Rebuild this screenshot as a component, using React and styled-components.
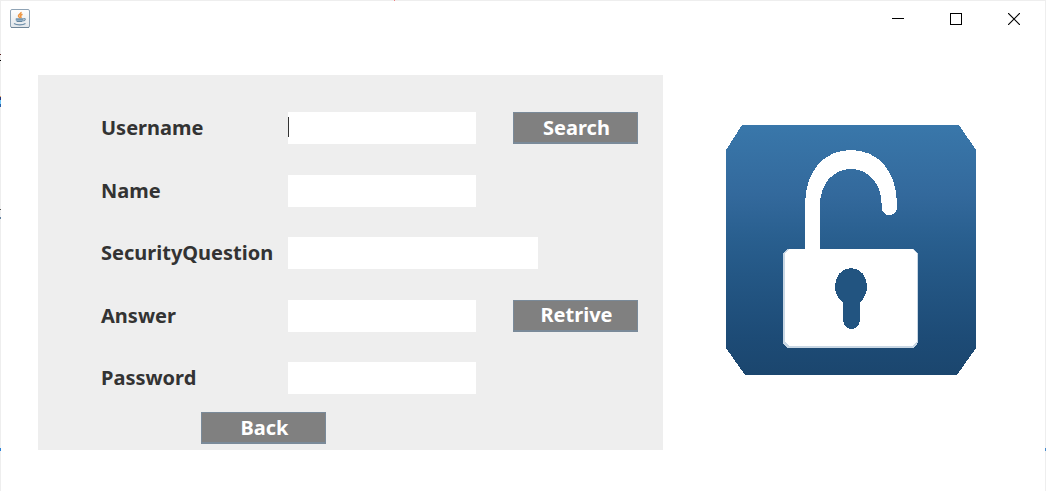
import React from 'react';
import styled, { createGlobalStyle } from 'styled-components';

const GlobalStyle = createGlobalStyle`
  * { box-sizing: border-box; }
  html, body, #root { height: 100%; }
  body {
    margin: 0;
    background: #fff;
    font-family: "Noto Sans", "Open Sans", sans-serif;
  }
`;

const Window = styled.div`
  display: flex;
  flex-direction: column;
  min-height: 100%;
  position: relative;
  border: 1px solid #eeeeee;
  border-bottom: 0;
`;

const EdgeMark = styled.span`
  position: absolute;
  width: 1px;
  height: ${(p) => p.$h}px;
  top: ${(p) => p.$top}px;
  left: ${(p) => p.$left};
  background: ${(p) => p.$color};
`;

const TitleBar = styled.header`
  display: flex;
  align-items: center;
  justify-content: space-between;
  height: 36px;
  padding: 0 2px 0 9px;
`;

const Controls = styled.div`
  display: flex;
`;

const ControlButton = styled.button`
  display: flex;
  align-items: center;
  justify-content: center;
  width: 58px;
  height: 36px;
  padding: 0;
  border: 0;
  background: transparent;
`;

const Content = styled.main`
  display: flex;
  align-items: flex-start;
  gap: 63px;
  padding: 38px 69px 41px 37px;
`;

const Panel = styled.form`
  flex: 1;
  padding: 37px 25px 6px 63px;
  background: #eeeeee;
`;

const Fields = styled.div`
  display: flex;
  flex-direction: column;
  justify-content: space-between;
  min-height: 282px;
`;

const Row = styled.div`
  display: grid;
  grid-template-columns: 187px 188px 1fr;
  align-items: center;
  height: 32px;
`;

const Label = styled.label`
  color: #333333;
  font-size: 20px;
  font-weight: 700;
  line-height: 32px;
`;

const InputBox = styled.div`
  position: relative;
  width: ${(p) => (p.$wide ? 250 : 188)}px;
  height: 32px;
`;

const Input = styled.input`
  display: block;
  width: 100%;
  height: 100%;
  padding: 0;
  border: 0;
  outline: 0;
  background: #fff;
  color: #333333;
  font: inherit;
`;

const Caret = styled.span`
  position: absolute;
  left: 0;
  top: 5px;
  width: 1px;
  height: 20px;
  background: #333333;
`;

const Button = styled.button`
  justify-self: end;
  width: 125px;
  height: 32px;
  padding: 0 0 0 2px;
  border: 1px solid #7a8a99;
  border-bottom-width: 2px;
  background: #808080;
  color: #fff;
  font-family: inherit;
  font-size: 20px;
  font-weight: 700;
  line-height: 28px;
`;

const Footer = styled.div`
  display: flex;
  padding: 18px 0 0 100px;
`;

const Artwork = styled.svg`
  flex: none;
  display: block;
  margin-top: 50px;
`;

const JavaIcon = () => (
  <svg width="20" height="20" viewBox="0 0 20 20" aria-hidden="true">
    <defs>
      <linearGradient id="tile" x1="0" y1="0" x2="0" y2="1">
        <stop offset="0" stopColor="#ffffff" />
        <stop offset="1" stopColor="#e2e6ea" />
      </linearGradient>
    </defs>
    <rect x="0.5" y="0.5" width="19" height="18" rx="1.5" fill="url(#tile)" stroke="#8fa3b5" />
    <path d="M1 18.500H19" stroke="#6f8598" />
    <path d="M11 3c.8 1.800-3.200 2.500-2.500 4.200.3.8 1.300 1 1.200 2M12.500 5.200c-2 .8-2.500 1.800-1.600 2.600.4.500.1 1-.3 1.400" fill="none" stroke="#ee9440" strokeWidth="1.500" />
    <path d="M5.500 9.500h8c0 2-.5 3.500-2 3.500h-4c-1.500 0-2-1.500-2-3.500z" fill="#8facc2" />
    <path d="M6 10h7.500M7 12.500h5" stroke="#64859f" />
    <path d="M13.500 9.500c2.800-.3 2 2.300-.8 2.500M4 14.500c2.500 1.800 9 1.800 11.500 0" fill="none" stroke="#6f8fa9" strokeWidth="1.200" />
  </svg>
);

const Lock = () => (
  <Artwork width="250" height="250" viewBox="0 0 250 250" role="img" aria-label="Open padlock">
    <defs>
      <linearGradient id="blue" x1="0" y1="0" x2="0" y2="1">
        <stop offset="0" stopColor="#3977aa" />
        <stop offset="0.280" stopColor="#33699c" />
        <stop offset="0.450" stopColor="#295f8f" />
        <stop offset="0.600" stopColor="#245785" />
        <stop offset="0.850" stopColor="#1d4b76" />
        <stop offset="1" stopColor="#1b466e" />
      </linearGradient>
    </defs>
    <g shapeRendering="crispEdges">
      <path d="M16 0H233L250 25V223L231 250H19L0 223V25Z" fill="url(#blue)" />
      <path d="M79 80C79 46 98 25 125 25S171 46 171 80V82A7.500 8 0 0 1 155.500 82V78C155 59 143 44 125 44S94 59 94 80V128H79Z" fill="#fff" />
      <rect x="57" y="124" width="135" height="99" rx="7" fill="#c9d7e4" />
      <rect x="59" y="124" width="132" height="97" rx="7" fill="#fff" />
      <path d="M125 143C134 143 141 151 141 161C141 168 138 174 134 177V196Q132 204 125.500 204T117 196V177C112 174 109 168 109 161C109 151 116 143 125 143Z" fill="#225480" />
    </g>
  </Artwork>
);

const fields = [
  { id: 'username', label: 'Username', action: 'Search', caret: true },
  { id: 'name', label: 'Name' },
  { id: 'question', label: 'SecurityQuestion', wide: true },
  { id: 'answer', label: 'Answer', action: 'Retrive' },
  { id: 'password', label: 'Password' },
];

const edgeMarks = [
  { top: 54, h: 1, color: '#5a2020' },
  { top: 60, h: 1, color: '#000000' },
  { top: 96, h: 1, color: '#e0a060' },
  { top: 97, h: 3, color: '#203880' },
  { top: 100, h: 4, color: '#70c8f8' },
  { top: 104, h: 3, color: '#2860a8' },
  { top: 209, h: 1, color: '#555555' },
  { top: 217, h: 2, color: '#6080a0' },
  { top: 448, h: 3, color: '#2a82d8' },
  { top: 448, h: 3, color: '#4a8ccc', left: '100%' },
  { top: 0, h: 1, color: '#f08080', left: '393px' },
];

export default function App() {
  return (
    <>
      <GlobalStyle />
      <Window>
        {edgeMarks.map((m, i) => (
          <EdgeMark key={i} $top={m.top - 1} $h={m.h} $color={m.color} $left={m.left || '-1px'} />
        ))}
        <TitleBar>
          <JavaIcon />
          <Controls>
            <ControlButton type="button" aria-label="Minimize">
              <svg width="12" height="12" shapeRendering="crispEdges"><path d="M0 5.500H12" stroke="#000" /></svg>
            </ControlButton>
            <ControlButton type="button" aria-label="Maximize">
              <svg width="12" height="12" shapeRendering="crispEdges"><rect x="0.500" y="0.500" width="11" height="11" fill="none" stroke="#000" /></svg>
            </ControlButton>
            <ControlButton type="button" aria-label="Close">
              <svg width="12" height="12"><path d="M0 0L12 12M12 0L0 12" stroke="#000" strokeWidth="1.200" /></svg>
            </ControlButton>
          </Controls>
        </TitleBar>
        <Content>
          <Panel onSubmit={(e) => e.preventDefault()}>
            <Fields>
              {fields.map((f) => (
                <Row key={f.id}>
                  <Label htmlFor={f.id}>{f.label}</Label>
                  <InputBox $wide={f.wide}>
                    <Input id={f.id} type="text" />
                    {f.caret && <Caret />}
                  </InputBox>
                  {f.action && <Button type="button">{f.action}</Button>}
                </Row>
              ))}
            </Fields>
            <Footer>
              <Button type="button">Back</Button>
            </Footer>
          </Panel>
          <Lock />
        </Content>
      </Window>
    </>
  );
}
